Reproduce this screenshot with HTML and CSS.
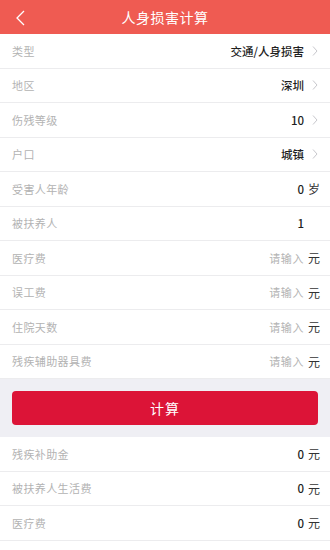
FILE: index.html
```html
<!DOCTYPE html>
<html lang="zh">
<head>
<meta charset="utf-8">
<link rel="stylesheet" href="styles.css">
</head>
<body>
<div class="app">
  <header class="topbar">
    <svg class="back" width="10" height="16" viewBox="0 0 10 16"><path d="M9 1 L2 8 L9 15" fill="none" stroke="#fff" stroke-width="1.3"/></svg>
    <h1 class="title">人身损害计算</h1>
  </header>
  <section class="list">
    <div class="row"><span class="label">类型</span><span class="value">交通/人身损害</span><span class="tail chev"><svg width="6" height="10" viewBox="0 0 6 10"><path d="M1 0.5 L5 5 L1 9.5" fill="none" stroke="#c7c7cc" stroke-width="1"/></svg></span></div>
    <div class="row"><span class="label">地区</span><span class="value">深圳</span><span class="tail chev"><svg width="6" height="10" viewBox="0 0 6 10"><path d="M1 0.5 L5 5 L1 9.5" fill="none" stroke="#c7c7cc" stroke-width="1"/></svg></span></div>
    <div class="row"><span class="label">伤残等级</span><span class="value">10</span><span class="tail chev"><svg width="6" height="10" viewBox="0 0 6 10"><path d="M1 0.5 L5 5 L1 9.5" fill="none" stroke="#c7c7cc" stroke-width="1"/></svg></span></div>
    <div class="row"><span class="label">户口</span><span class="value">城镇</span><span class="tail chev"><svg width="6" height="10" viewBox="0 0 6 10"><path d="M1 0.5 L5 5 L1 9.5" fill="none" stroke="#c7c7cc" stroke-width="1"/></svg></span></div>
    <div class="row"><span class="label">受害人年龄</span><span class="value">0</span><span class="tail unit">岁</span></div>
    <div class="row"><span class="label">被扶养人</span><span class="value">1</span><span class="tail"></span></div>
    <div class="row"><span class="label">医疗费</span><span class="value placeholder">请输入</span><span class="tail unit">元</span></div>
    <div class="row"><span class="label">误工费</span><span class="value placeholder">请输入</span><span class="tail unit">元</span></div>
    <div class="row"><span class="label">住院天数</span><span class="value placeholder">请输入</span><span class="tail unit">元</span></div>
    <div class="row"><span class="label">残疾辅助器具费</span><span class="value placeholder">请输入</span><span class="tail unit">元</span></div>
  </section>
  <div class="action">
    <button class="calc">计算</button>
  </div>
  <section class="list">
    <div class="row"><span class="label">残疾补助金</span><span class="value">0</span><span class="tail unit">元</span></div>
    <div class="row"><span class="label">被扶养人生活费</span><span class="value">0</span><span class="tail unit">元</span></div>
    <div class="row"><span class="label">医疗费</span><span class="value">0</span><span class="tail unit">元</span></div>
  </section>
</div>
</body>
</html>
```
FILE: styles.css
```css
html, body {
  margin: 0;
  padding: 0;
}
body {
  font-family: "Noto Sans CJK SC", "Noto Sans", sans-serif;
  background: #ffffff;
  width: 330px;
  height: 550px;
  overflow: hidden;
}
.app {
  display: flex;
  flex-direction: column;
}
.topbar {
  height: 34px;
  background: #ef5b52;
  display: flex;
  align-items: center;
  justify-content: center;
  position: relative;
}
.back {
  position: absolute;
  left: 15px;
  top: 10px;
}
.title {
  margin: 0;
  font-size: 14px;
  font-weight: 400;
  color: #ffffff;
  letter-spacing: 0.5px;
}
.list {
  background: #ffffff;
  display: flex;
  flex-direction: column;
}
.row {
  box-sizing: border-box;
  height: 34.5px;
  display: flex;
  align-items: center;
  padding: 0 10px 0 12px;
  border-bottom: 1px solid #ececee;
  font-size: 11px;
}
.label {
  flex: 1;
  color: #b3b3b3;
  letter-spacing: 0.4px;
}
.value {
  color: #1f1f1f;
  font-weight: 500;
  font-size: 11.5px;
}
.value.placeholder {
  color: #b3b3b3;
  font-weight: 400;
  font-size: 11px;
  letter-spacing: 0.6px;
}
.tail {
  width: 16px;
  display: flex;
  justify-content: flex-end;
  align-items: center;
}
.tail.chev {
  padding-right: 2px;
  width: 14px;
}
.unit {
  color: #333333;
  font-size: 12px;
}
.action {
  background: #efeff4;
  padding: 12px 12px 12px 12px;
}
.calc {
  display: block;
  width: 100%;
  height: 34px;
  border: none;
  border-radius: 4px;
  background: #dc1437;
  color: #ffffff;
  font-family: "Noto Sans CJK SC", "Noto Sans", sans-serif;
  font-size: 14px;
  letter-spacing: 1px;
}
```
